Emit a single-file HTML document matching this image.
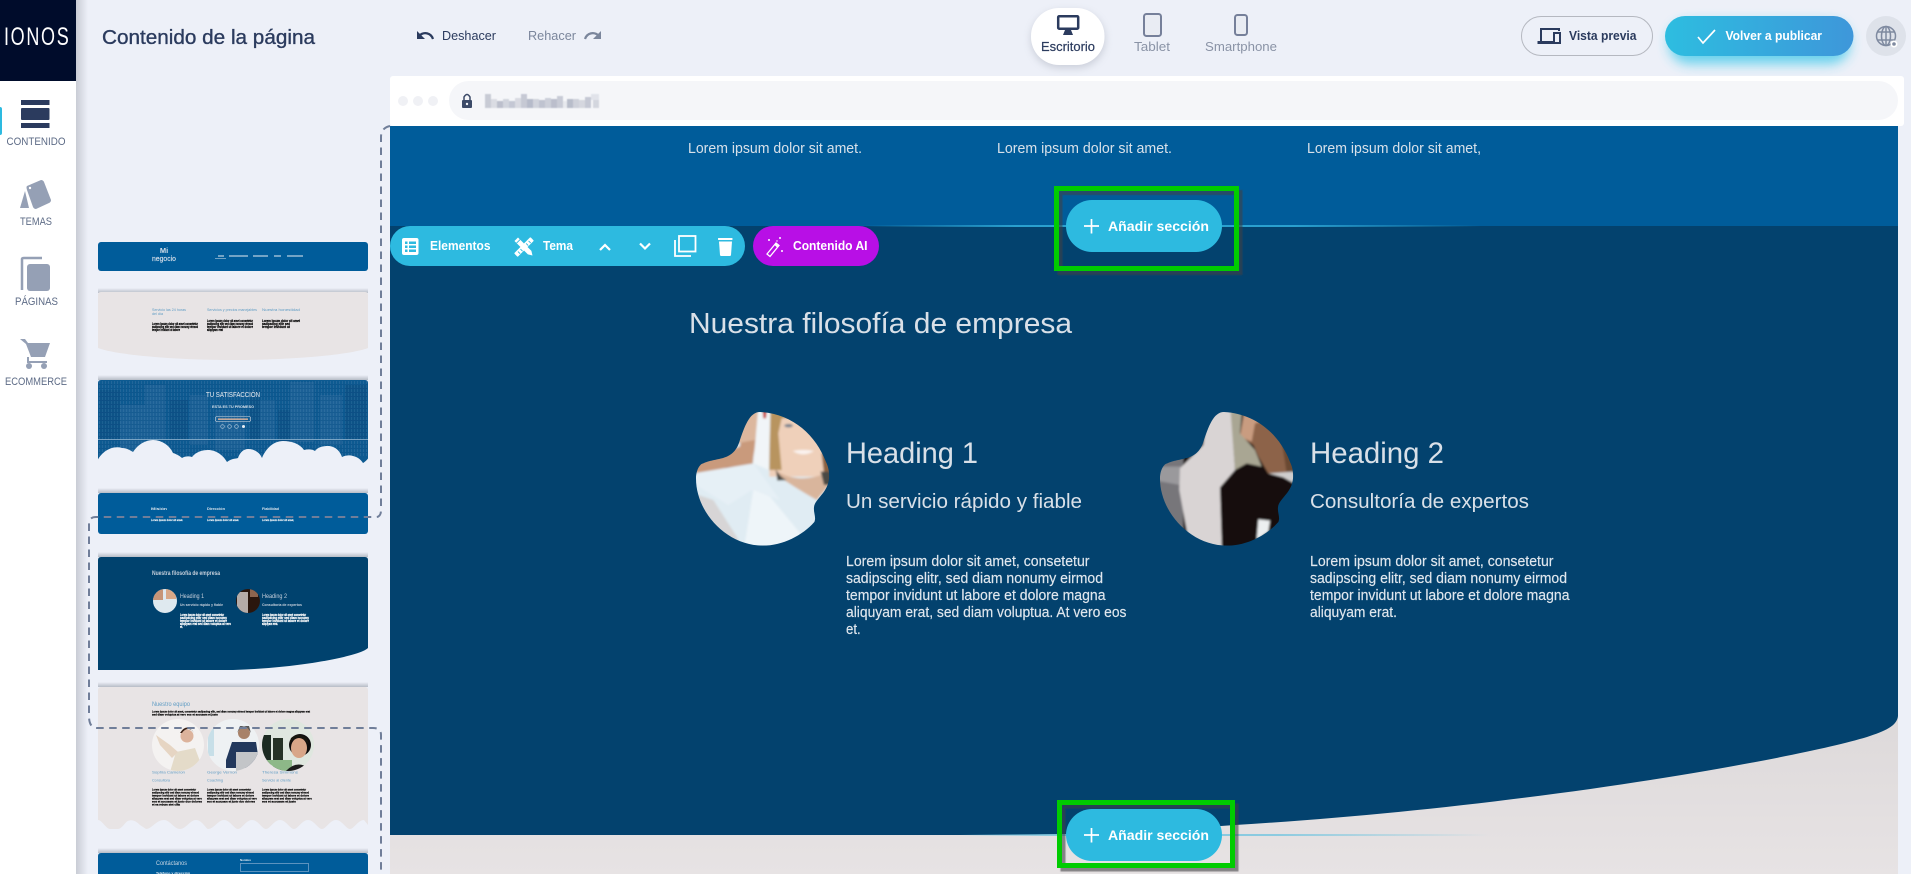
<!DOCTYPE html>
<html lang="es"><head><meta charset="utf-8"><title>Contenido de la página</title>
<style>
html,body{margin:0;padding:0;width:1911px;height:874px;overflow:hidden;background:#edf0f8}
svg{display:block}
text{font-family:"Liberation Sans",Arial,sans-serif}
</style></head><body>
<svg width="1911" height="874" viewBox="0 0 1911 874" xmlns="http://www.w3.org/2000/svg">
<defs>
<linearGradient id="sb" x1="0" x2="1" y1="0" y2="0"><stop offset="0" stop-color="#c9ccd5"/><stop offset="1" stop-color="#edf0f8"/></linearGradient>
<linearGradient id="cs" x1="0" x2="0" y1="0" y2="1"><stop offset="0" stop-color="#edf0f8"/><stop offset="1" stop-color="#b6bcc6"/></linearGradient>
<linearGradient id="pub" x1="0" x2="1" y1="0" y2="0"><stop offset="0" stop-color="#2dbde0"/><stop offset="1" stop-color="#3e97da"/></linearGradient>
<linearGradient id="l1" x1="860" x2="1481" y1="0" y2="0" gradientUnits="userSpaceOnUse"><stop offset="0" stop-color="#2aa0cf" stop-opacity="0"/><stop offset=".25" stop-color="#2aa0cf"/><stop offset=".7" stop-color="#2aa0cf"/><stop offset="1" stop-color="#2aa0cf" stop-opacity="0"/></linearGradient>
<linearGradient id="l2" x1="960" x2="1490" y1="0" y2="0" gradientUnits="userSpaceOnUse"><stop offset="0" stop-color="#7cc6de" stop-opacity="0"/><stop offset=".2" stop-color="#7cc6de"/><stop offset=".6" stop-color="#8ccbe0"/><stop offset="1" stop-color="#8ccbe0" stop-opacity="0"/></linearGradient>
<linearGradient id="grey" x1="0" x2="0" y1="0" y2="1"><stop offset="0" stop-color="#dcd8d9"/><stop offset="1" stop-color="#e7e3e4"/></linearGradient>
<pattern id="win" width="3" height="4" patternUnits="userSpaceOnUse"><rect width="1" height="4" fill="#5f97c0"/><rect width="3" height="1" fill="#0b4a7d"/></pattern>
<filter id="b1"><feGaussianBlur stdDeviation=".5"/></filter>
<filter id="ph" x="-10%" y="-10%" width="120%" height="120%"><feGaussianBlur stdDeviation="3.500"/></filter>
<filter id="thumb" filterUnits="userSpaceOnUse" x="90" y="230" width="290" height="650"><feGaussianBlur stdDeviation=".35"/></filter>
<filter id="psh" x="-30%" y="-50%" width="160%" height="220%"><feGaussianBlur stdDeviation="6"/></filter>
<filter id="wsh" x="-30%" y="-30%" width="160%" height="160%"><feGaussianBlur stdDeviation="4"/></filter>
<clipPath id="blob"><path d="M192 0C290 5 360 70 390 150C400 170 400 190 399 200C395 240 365 255 355 280C350 300 362 315 355 330C320 370 260 401 200 401C90 400 0 300 0 200C0 170 15 155 20 155C60 135 110 150 130 90C145 45 160 0 192 0Z"/></clipPath>
<clipPath id="t6a"><circle cx="178" cy="745" r="26"/></clipPath>
<clipPath id="t6b"><circle cx="233" cy="745" r="26"/></clipPath>
<clipPath id="t6c"><circle cx="288" cy="745" r="26"/></clipPath>
<clipPath id="t5a"><circle cx="165" cy="601" r="12"/></clipPath>
<clipPath id="t5b"><circle cx="248" cy="601" r="12"/></clipPath>
</defs>

<rect width="1911" height="874" fill="#edf0f8"/>

<!-- sidebar -->
<rect x="76" y="0" width="12" height="874" fill="url(#sb)"/>
<rect x="0" y="0" width="76" height="874" fill="#fff"/>
<rect x="0" y="0" width="76" height="81" fill="#000c2b"/>
<g transform="scale(.72 1)"><text x="5.500" y="45" font-size="25" fill="#fff" textLength="90" lengthAdjust="spacing">IONOS</text></g>
<rect x="-2" y="107" width="4" height="28" rx="2" fill="#2dbae0"/>
<g fill="#2b3b5e"><rect x="21" y="100" width="28.500" height="5"/><rect x="21" y="108" width="28.500" height="12" rx="1"/><rect x="21" y="123" width="28.500" height="5"/></g>
<text x="6.500" y="145" font-size="11" fill="#5d6b86" textLength="59" lengthAdjust="spacingAndGlyphs">CONTENIDO</text>
<g fill="#95a0b5"><path d="M27 186L41 180Q43 180 44 182L51 200Q51 202 49 203L36 209Q34 209 33 207L27 190Q26 187 27 186Z"/><circle cx="30" cy="188" r="1.200" fill="#fff"/><path d="M25 191L29 208H20Z"/></g>
<text x="20" y="225" font-size="11" fill="#5d6b86" textLength="32" lengthAdjust="spacingAndGlyphs">TEMAS</text>
<g><path d="M22 290V259Q22 258 24 258H42" fill="none" stroke="#95a0b5" stroke-width="2.500"/><rect x="27" y="264" width="23" height="27" rx="3" fill="#95a0b5"/></g>
<text x="15" y="305" font-size="11" fill="#5d6b86" textLength="43" lengthAdjust="spacingAndGlyphs">PÁGINAS</text>
<g fill="#95a0b5"><path d="M20 339H25L28 343H50L45 357H31L26 344Z"/><path d="M28 357V362H47" fill="none" stroke="#95a0b5" stroke-width="2"/><circle cx="29" cy="366" r="3"/><circle cx="44" cy="366" r="3"/></g>
<text x="5" y="385" font-size="11" fill="#5d6b86" textLength="62" lengthAdjust="spacingAndGlyphs">ECOMMERCE</text>

<!-- top bar -->
<text x="102" y="44" font-size="20" fill="#2b3b5e" stroke="#2b3b5e" stroke-width=".35" textLength="213" lengthAdjust="spacingAndGlyphs">Contenido de la página</text>
<path d="M433 39C431 33 424 31 419 36" fill="none" stroke="#2b3b5e" stroke-width="2.200"/><path d="M417 31V39H425Z" fill="#2b3b5e"/>
<text x="442" y="40" font-size="13" fill="#2b3b5e" textLength="54" lengthAdjust="spacingAndGlyphs">Deshacer</text>
<text x="528" y="40" font-size="13" fill="#7b869c" textLength="48" lengthAdjust="spacingAndGlyphs">Rehacer</text>
<path d="M585 39C587 33 594 31 599 36" fill="none" stroke="#7b869c" stroke-width="2.200"/><path d="M601 31V39H593Z" fill="#7b869c"/>

<rect x="1031" y="11" width="74" height="57" rx="28" fill="#8a90a0" opacity=".35" filter="url(#wsh)"/>
<rect x="1031" y="8" width="73.500" height="57" rx="28" fill="#fff"/>
<rect x="1058.200" y="16.200" width="20" height="12.500" rx="1" fill="#fff" stroke="#2b3b5e" stroke-width="2.500"/>
<path d="M1065 30H1071L1073 35H1063Z" fill="#2b3b5e"/>
<text x="1041" y="51" font-size="13" fill="#2b3b5e" stroke="#2b3b5e" stroke-width=".2" textLength="54" lengthAdjust="spacingAndGlyphs">Escritorio</text>
<rect x="1144" y="14" width="17" height="22" rx="2.500" fill="#e9ecf3" stroke="#76809a" stroke-width="2"/><rect x="1150" y="34" width="5" height="1" fill="#eee"/>
<text x="1134" y="51" font-size="13" fill="#8a93a6" textLength="36" lengthAdjust="spacingAndGlyphs">Tablet</text>
<rect x="1235" y="15" width="12" height="20" rx="2.500" fill="#e9ecf3" stroke="#76809a" stroke-width="2"/><rect x="1239" y="33" width="4" height="1" fill="#eee"/>
<text x="1205" y="51" font-size="13" fill="#8a93a6" textLength="72" lengthAdjust="spacingAndGlyphs">Smartphone</text>

<rect x="1521.500" y="16.500" width="131" height="39" rx="19.500" fill="#edf0f8" stroke="#b5b8c0" stroke-width="1"/>
<path d="M1541 41V29H1559V31" fill="none" stroke="#2b3b5e" stroke-width="2"/><rect x="1537.500" y="41" width="16" height="3" fill="#2b3b5e"/>
<rect x="1554" y="33" width="6" height="10" fill="none" stroke="#2b3b5e" stroke-width="2"/>
<text x="1569" y="40" font-size="13" fill="#2b3b5e" textLength="67.500" lengthAdjust="spacingAndGlyphs" font-weight="700">Vista previa</text>

<rect x="1669" y="22" width="181" height="42" rx="20" fill="#2fc5e8" opacity=".7" filter="url(#psh)"/>
<rect x="1665" y="16" width="188.500" height="40" rx="20" fill="url(#pub)"/>
<path d="M1698 37L1703 43L1715 30" fill="none" stroke="#fff" stroke-width="1.700"/>
<text x="1725.500" y="40" font-size="13" fill="#fff" textLength="96.500" lengthAdjust="spacingAndGlyphs" font-weight="700">Volver a publicar</text>

<circle cx="1886" cy="36" r="20" fill="#dee2ea"/>
<g fill="none" stroke="#7f8aa0" stroke-width="1.500"><circle cx="1886" cy="36" r="9.500"/><ellipse cx="1886" cy="36" rx="4.500" ry="9.500"/><path d="M1877 32H1895M1877 40H1895M1886 26V46"/></g>
<circle cx="1894" cy="44" r="3.500" fill="#fff"/><circle cx="1894" cy="44" r="1.800" fill="#7f8aa0"/>

<!-- browser frame -->
<rect x="390" y="76" width="1514" height="50" rx="3" fill="#fff"/>
<rect x="449" y="81" width="1449" height="39" rx="19.500" fill="#f5f6f9"/>
<g fill="#f0f1f5"><circle cx="403" cy="101" r="5"/><circle cx="418" cy="101" r="5"/><circle cx="433" cy="101" r="5"/></g>
<rect x="462" y="100" width="10" height="8" rx="1" fill="#3c4a68"/><path d="M464 100V97Q467 92 470 97V100" fill="none" stroke="#3c4a68" stroke-width="1.500"/><circle cx="467" cy="104" r="1.200" fill="#f5f6f9"/>
<g filter="url(#b1)" opacity=".9">
<rect x="485" y="94" width="6" height="14" fill="#c4c7d2"/><rect x="491" y="99" width="6" height="9" fill="#d8dae1"/><rect x="497" y="101" width="6" height="7" fill="#b6bac8"/><rect x="503" y="99" width="6" height="9" fill="#ced1da"/><rect x="509" y="101" width="6" height="7" fill="#bfc3d0"/><rect x="515" y="98" width="6" height="10" fill="#d6d8e0"/><rect x="521" y="94" width="6" height="14" fill="#c1c5d1"/><rect x="527" y="99" width="6" height="9" fill="#b0b5c5"/><rect x="533" y="99" width="6" height="9" fill="#cdd0d9"/><rect x="539" y="100" width="6" height="8" fill="#babecc"/><rect x="545" y="98" width="6" height="10" fill="#c8cbd6"/><rect x="551" y="99" width="6" height="9" fill="#b5b9c8"/><rect x="557" y="96" width="6" height="12" fill="#c4c7d3"/><rect x="563" y="101" width="4" height="7" fill="#e6e8ed"/><rect x="567" y="99" width="6" height="9" fill="#b2b7c6"/><rect x="573" y="99" width="6" height="9" fill="#cacdd7"/><rect x="579" y="100" width="6" height="8" fill="#d2d4dd"/><rect x="585" y="97" width="6" height="11" fill="#c0c4d0"/><rect x="591" y="94" width="8" height="6" fill="#dfe2e9"/><rect x="593" y="100" width="6" height="8" fill="#d0d3dc"/>
</g>

<!-- page -->
<rect x="390" y="126" width="1508" height="100" fill="#005c9a"/>
<rect x="390" y="700" width="1508" height="174" fill="url(#grey)"/>
<path d="M390 226H1898V716C1897 726 1885 731 1867 737C1790 760 1520 808 1235 825C1170 830 1100 834 1035 835H390Z" fill="#03426e"/>
<rect x="860" y="225" width="621" height="2" fill="url(#l1)"/>
<rect x="960" y="834" width="530" height="2" fill="url(#l2)"/>

<g fill="#d8e1ea" font-size="15">
<text x="688" y="153" textLength="174" lengthAdjust="spacingAndGlyphs">Lorem ipsum dolor sit amet.</text>
<text x="997" y="153" textLength="175" lengthAdjust="spacingAndGlyphs">Lorem ipsum dolor sit amet.</text>
<text x="1307" y="153" textLength="174" lengthAdjust="spacingAndGlyphs">Lorem ipsum dolor sit amet,</text>
</g>

<text x="689" y="333" font-size="29" fill="#d9e0e8" textLength="383" lengthAdjust="spacingAndGlyphs">Nuestra filosofía de empresa</text>

<!-- blob 1 -->
<g transform="translate(696 412) scale(.3333)"><g clip-path="url(#blob)"><g transform="translate(-78 -66)" filter="url(#ph)">
<rect x="40" y="30" width="470" height="470" fill="#e0ecf3"/>
<path d="M70 215L210 170L225 60H275L250 200L245 260L175 340L70 270Z" fill="#c99a7c"/>
<path d="M170 230L245 230L240 265L175 340L100 280Z" fill="#b98468"/>
<path d="M200 60H270L255 150L200 160Z" fill="#dcb79e"/>
<rect x="298" y="40" width="200" height="220" fill="#efd0ba"/>
<path d="M298 40H420V78L370 82L335 85L325 130L335 240H298Z" fill="#b8945f"/>
<path d="M455 190L500 180V250H462Z" fill="#8a6140"/>
<path d="M266 40H302L297 240L250 220Z" fill="#f1f5f8"/>
<path d="M277 50H292L288 85H280Z" fill="#c9423d"/>
<path d="M368 183Q400 176 432 183Q400 203 368 183Z" fill="#faf3ef"/>
<ellipse cx="356" cy="107" rx="13" ry="5" fill="#74808e"/>
<path d="M315 240Q390 290 490 240V270L440 330Q370 290 320 255Z" fill="#d9b59c"/>
<path d="M318 238Q330 262 350 270L322 272Z" fill="#4a4a44"/>
<path d="M452 245H490V285H462Z" fill="#4a4a44"/>
<path d="M250 220L330 330L245 300L175 345L70 280V250Z" fill="#e6f0f6"/>
<path d="M70 310L130 330L200 440L220 490H40Z" fill="#d7d5d6"/>
<path d="M250 300L300 320L440 490H220Z" fill="#eef5f9"/>
</g></g></g>
<text x="846" y="463" font-size="29.500" fill="#d9e0e8" textLength="132" lengthAdjust="spacingAndGlyphs">Heading 1</text>
<text x="846" y="508" font-size="20" fill="#d9e0e8" textLength="236" lengthAdjust="spacingAndGlyphs">Un servicio rápido y fiable</text>
<g font-size="14.300" fill="#e0e7ee" stroke="#e0e7ee" stroke-width=".15">
<text x="846" y="566" textLength="243.500" lengthAdjust="spacingAndGlyphs">Lorem ipsum dolor sit amet, consetetur</text>
<text x="846" y="583" textLength="257" lengthAdjust="spacingAndGlyphs">sadipscing elitr, sed diam nonumy eirmod</text>
<text x="846" y="600" textLength="259.500" lengthAdjust="spacingAndGlyphs">tempor invidunt ut labore et dolore magna</text>
<text x="846" y="617" textLength="280.500" lengthAdjust="spacingAndGlyphs">aliquyam erat, sed diam voluptua. At vero eos</text>
<text x="846" y="634" textLength="14.700" lengthAdjust="spacingAndGlyphs">et.</text>
</g>

<!-- blob 2 -->
<g transform="translate(1160 412) scale(.3333)"><g clip-path="url(#blob)"><g transform="translate(-60 -66)" filter="url(#ph)">
<rect x="30" y="30" width="470" height="470" fill="#140c08"/>
<rect x="30" y="200" width="100" height="260" fill="#77767a"/>
<path d="M40 270L120 285L125 285V230H40Z" fill="#9a999c"/>
<path d="M315 50L300 140L340 165L355 200L385 250L480 255V50Z" fill="#8d6449"/>
<path d="M315 50L300 140L335 155L345 100L400 85V50Z" fill="#c99c80"/>
<path d="M420 120L480 110V250H440Z" fill="#6b4833"/>
<path d="M268 40H308L300 130L345 180L365 230L320 220L285 240Z" fill="#a9a693"/>
<path d="M120 235L190 165L205 40H270L285 240L240 292L246 490H160L140 420L118 300Z" fill="#d9d4d4"/>
<path d="M385 250L460 245L480 290L430 262Z" fill="#cfcece"/>
<path d="M355 388L390 392L385 425L350 450Z" fill="#eceff0"/>
</g></g></g>
<text x="1310" y="463" font-size="29.500" fill="#d9e0e8" textLength="134" lengthAdjust="spacingAndGlyphs">Heading 2</text>
<text x="1310" y="508" font-size="20" fill="#d9e0e8" textLength="219" lengthAdjust="spacingAndGlyphs">Consultoría de expertos</text>
<g font-size="14.300" fill="#e0e7ee" stroke="#e0e7ee" stroke-width=".15">
<text x="1310" y="566" textLength="243.500" lengthAdjust="spacingAndGlyphs">Lorem ipsum dolor sit amet, consetetur</text>
<text x="1310" y="583" textLength="257" lengthAdjust="spacingAndGlyphs">sadipscing elitr, sed diam nonumy eirmod</text>
<text x="1310" y="600" textLength="259.500" lengthAdjust="spacingAndGlyphs">tempor invidunt ut labore et dolore magna</text>
<text x="1310" y="617" textLength="87" lengthAdjust="spacingAndGlyphs">aliquyam erat.</text>
</g>

<!-- toolbar -->
<rect x="390" y="226" width="355" height="40" rx="20" fill="#2dbae0"/>
<rect x="402" y="238" width="16.500" height="17" rx="2" fill="#fff"/>
<g fill="#2dbae0"><rect x="405" y="241.500" width="2.500" height="2.500"/><rect x="405" y="245.500" width="2.500" height="2.500"/><rect x="405" y="249.500" width="2.500" height="2.500"/><rect x="409" y="241.500" width="7" height="2.500"/><rect x="409" y="245.500" width="7" height="2.500"/><rect x="409" y="249.500" width="7" height="2.500"/></g>
<text x="430" y="250" font-size="13" font-weight="700" fill="#fff" textLength="60.500" lengthAdjust="spacingAndGlyphs">Elementos</text>
<g transform="translate(524 247)"><rect x="-2.500" y="-11.500" width="5" height="23" rx=".8" fill="#fff" transform="rotate(45)"/><path d="M-2.500 -11L2.500 -11V8L0 12L-2.500 8Z" fill="#fff" transform="rotate(-45)"/><g stroke="#2dbae0" stroke-width=".9" fill="none"><path d="M-1 -7.500L2 -7.500M-1 -4L2 -4M-1 4L2 4M-1 7.500L2 7.500" transform="rotate(45)"/><path d="M-2.500 -8H2.500" transform="rotate(-45)"/></g></g>
<text x="543" y="250" font-size="13" font-weight="700" fill="#fff" textLength="30" lengthAdjust="spacingAndGlyphs">Tema</text>
<path d="M600 250L605 245L610 250" fill="none" stroke="#fff" stroke-width="2.200"/>
<path d="M640 243.500L645 248.500L650 243.500" fill="none" stroke="#fff" stroke-width="2.200"/>
<rect x="679" y="236" width="16.500" height="15.500" fill="none" stroke="#fff" stroke-width="1.800"/>
<path d="M675 240V256H691" fill="none" stroke="#fff" stroke-width="1.800"/>
<rect x="718" y="238" width="14.500" height="2" rx=".5" fill="#fff"/><path d="M719 241.500H732L731 255Q731 256 729 256H722Q720 256 720 255Z" fill="#fff"/>

<rect x="753" y="226" width="126" height="40" rx="20" fill="#b80fe6"/>
<path d="M767 254L776 243L779 245.500L770 256.500Z" fill="none" stroke="#fff" stroke-width="1.300"/>
<path d="M775 244L778 247" stroke="#fff" stroke-width="2"/>
<g fill="#fff"><circle cx="769" cy="240" r="1"/><circle cx="780" cy="238" r="1"/><circle cx="782" cy="251" r="1"/><circle cx="777" cy="241" r=".7"/></g>
<text x="793" y="250" font-size="13" font-weight="700" fill="#fff" textLength="74.500" lengthAdjust="spacingAndGlyphs">Contenido AI</text>

<!-- add section 1 -->
<rect x="1060" y="192.500" width="180" height="80" fill="none" stroke="#3f3f46" stroke-opacity=".6" stroke-width="5" filter="url(#b1)"/>
<rect x="1056.500" y="188.500" width="180" height="80" fill="none" stroke="#00cc00" stroke-width="5"/>
<rect x="1066" y="200" width="156" height="52" rx="26" fill="#2dbae0"/>
<path d="M1091.500 219V233.500M1084 226H1099" stroke="#fff" stroke-width="1.700" fill="none"/>
<text x="1108" y="231" font-size="13.500" font-weight="700" fill="#fff" textLength="101" lengthAdjust="spacingAndGlyphs">Añadir sección</text>

<!-- add section 2 -->
<rect x="1063" y="806" width="173" height="63" fill="none" stroke="#3f3f46" stroke-opacity=".6" stroke-width="5" filter="url(#b1)"/>
<rect x="1059.500" y="802.500" width="173" height="63" fill="none" stroke="#00cc00" stroke-width="5"/>
<rect x="1066" y="809" width="156" height="52" rx="26" fill="#2dbae0"/>
<path d="M1091.500 828V842.500M1084 835H1099" stroke="#fff" stroke-width="1.700" fill="none"/>
<text x="1108" y="840" font-size="13.500" font-weight="700" fill="#fff" textLength="101" lengthAdjust="spacingAndGlyphs">Añadir sección</text>

<!-- thumbnails -->
<g filter="url(#thumb)">
<!-- T1 -->
<rect x="98" y="242" width="270" height="29" rx="3" fill="#005c9a"/>
<text x="164" y="253" font-size="7.500" font-weight="700" fill="#d5dfea" text-anchor="middle">Mi</text>
<text x="152" y="261" font-size="7.500" fill="#d5dfea" stroke="#d5dfea" stroke-width=".15" textLength="24" lengthAdjust="spacingAndGlyphs">negocio</text>
<g fill="#e6edf3"><rect x="218" y="255.500" width="6" height="1"/><rect x="215" y="258" width="11" height=".8" opacity=".6"/><rect x="229" y="255.500" width="19" height="1"/><rect x="253" y="255.500" width="15" height="1"/><rect x="274" y="255.500" width="7" height="1"/><rect x="287" y="255.500" width="16" height="1"/></g>

<!-- T2 -->
<rect x="98" y="288" width="270" height="5" fill="url(#cs)"/>
<path d="M98 295Q98 292 101 292H365Q368 292 368 295V348C350 355 290 360 233 360C176 360 116 355 98 348Z" fill="#e8e4e5"/>
<g font-size="3.800" fill="#5f9cc4"><text x="152" y="311" textLength="34" lengthAdjust="spacingAndGlyphs">Servicio las 24 horas</text><text x="152" y="315" textLength="11" lengthAdjust="spacingAndGlyphs">del día</text><text x="207" y="311" textLength="50" lengthAdjust="spacingAndGlyphs">Servicios y precios manejables</text><text x="262" y="311" textLength="38" lengthAdjust="spacingAndGlyphs">Nuestra honestidad</text></g>
<g font-size="3.200" font-weight="700" fill="#000" stroke="#000" stroke-width=".2"><text x="152" y="325" textLength="46" lengthAdjust="spacingAndGlyphs">Lorem ipsum dolor sit amet consetetur</text><text x="152" y="328" textLength="46" lengthAdjust="spacingAndGlyphs">sadipscing elitr sed diam nonumy eirmod</text><text x="152" y="331" textLength="28" lengthAdjust="spacingAndGlyphs">tempor invidunt ut labore</text>
<text x="207" y="322" textLength="46" lengthAdjust="spacingAndGlyphs">Lorem ipsum dolor sit amet consetetur</text><text x="207" y="325" textLength="46" lengthAdjust="spacingAndGlyphs">sadipscing elitr sed diam nonumy eirmod</text><text x="207" y="328" textLength="46" lengthAdjust="spacingAndGlyphs">tempor invidunt ut labore et dolore</text><text x="207" y="331" textLength="16" lengthAdjust="spacingAndGlyphs">aliquyam erat</text>
<text x="262" y="322" textLength="38" lengthAdjust="spacingAndGlyphs">Lorem ipsum dolor sit amet</text><text x="262" y="325" textLength="28" lengthAdjust="spacingAndGlyphs">sadipscing elitr sed</text><text x="262" y="328" textLength="28" lengthAdjust="spacingAndGlyphs">tempor invidunt ut</text></g>

<!-- T3 -->
<rect x="98" y="375" width="270" height="5" fill="url(#cs)"/>
<path d="M98 383Q98 380 101 380H365Q368 380 368 383V470H98Z" fill="#115a91"/>
<g fill="#2b6c9e" opacity=".4">
<rect x="145" y="385" width="20" height="55"/><rect x="120" y="405" width="25" height="50"/><rect x="190" y="395" width="18" height="50"/><rect x="215" y="410" width="30" height="40"/><rect x="290" y="382" width="24" height="60"/><rect x="320" y="395" width="22" height="50"/><rect x="260" y="400" width="15" height="40"/>
</g>
<g fill="#0b4a7d" opacity=".45"><rect x="100" y="390" width="20" height="50"/><rect x="170" y="400" width="18" height="40"/><rect x="250" y="390" width="10" height="50"/><rect x="278" y="410" width="12" height="35"/><rect x="345" y="385" width="22" height="55"/></g>
<rect x="98" y="381" width="270" height="75" fill="url(#win)" opacity=".2"/>
<text x="206" y="397" font-size="7" fill="#d6dfe8" stroke="#d6dfe8" stroke-width=".1" textLength="54" lengthAdjust="spacingAndGlyphs">TU SATISFACCIÓN</text>
<text x="212" y="408" font-size="4" font-weight="700" fill="#d6dfe8" textLength="42" lengthAdjust="spacingAndGlyphs">ESTA ES TU PROMESO</text>
<rect x="215.500" y="416.500" width="35" height="5" rx="1.500" fill="none" stroke="#d8dde4" stroke-width=".6"/><rect x="218" y="418.500" width="30" height="1.300" fill="#eeb99a"/>
<g fill="none" stroke="#bcd0e0" stroke-width=".6"><circle cx="222.500" cy="426.500" r="1.800"/><circle cx="229.500" cy="426.500" r="1.800"/><circle cx="236.500" cy="426.500" r="1.800"/></g><circle cx="243.500" cy="426.500" r="1.500" fill="#e6edf3"/>
<rect x="98" y="439" width="270" height=".8" fill="#8fb4d0"/>
<path d="M96 473V464C100 452 112 445 122 448C126 448 130 450 133 452C138 444 146 440 153 440C162 440 170 446 173 453C176 454 180 456 182 458C185 456 189 456 192 457C196 452 202 450 208 450C216 450 223 455 227 462C232 458 236 459 238 458C240 452 244 449 248 449C255 449 260 453 262 458C266 448 274 441 283 441C292 441 300 444 304 450C308 449 312 449 315 451C318 447 323 446 328 446C335 446 340 451 342 457C346 455 350 455 353 456C358 457 361 460 363 463C365 462 367 460 370 456V473Z" fill="#edf0f8"/>

<!-- T4 -->
<rect x="98" y="488" width="270" height="5" fill="url(#cs)"/>
<rect x="98" y="493" width="270" height="41" rx="3" fill="#005c9a"/>
<g font-size="3.800" font-weight="700" fill="#d9e3ec"><text x="151" y="510" textLength="16" lengthAdjust="spacingAndGlyphs">Misión</text><text x="207" y="510" textLength="18" lengthAdjust="spacingAndGlyphs">Dirección</text><text x="262" y="510" textLength="17" lengthAdjust="spacingAndGlyphs">Fiabilidad</text></g>
<g font-size="3" font-weight="700" fill="#eef2f6" stroke="#eef2f6" stroke-width=".15"><text x="151" y="521" textLength="32" lengthAdjust="spacingAndGlyphs">Lorem ipsum dolor sit amet.</text><text x="207" y="521" textLength="32" lengthAdjust="spacingAndGlyphs">Lorem ipsum dolor sit amet.</text><text x="262" y="521" textLength="32" lengthAdjust="spacingAndGlyphs">Lorem ipsum dolor sit amet,</text></g>

<!-- T5 -->
<rect x="98" y="552" width="270" height="5" fill="url(#cs)"/>
<path d="M98 560Q98 557 101 557H365Q368 557 368 560V648C360 656 300 668 233 670H98Z" fill="#03426e"/>
<text x="152" y="575" font-size="6" font-weight="700" fill="#c5d0dc" textLength="68" lengthAdjust="spacingAndGlyphs">Nuestra filosofía de empresa</text>
<g clip-path="url(#t5a)"><rect x="153" y="589" width="24" height="24" fill="#dfe9ef"/><rect x="153" y="589" width="10" height="11" fill="#c69578"/><rect x="166" y="589" width="10" height="10" fill="#d8a888"/></g>
<g clip-path="url(#t5b)"><rect x="236" y="589" width="24" height="24" fill="#2a1810"/><rect x="237" y="592" width="11" height="21" fill="#b5aca8"/><rect x="250" y="589" width="8" height="8" fill="#8d6550"/></g>
<text x="180" y="598" font-size="6" fill="#c5d0dc" textLength="24" lengthAdjust="spacingAndGlyphs">Heading 1</text>
<text x="262" y="598" font-size="6" fill="#c5d0dc" textLength="25" lengthAdjust="spacingAndGlyphs">Heading 2</text>
<text x="180" y="606" font-size="3.800" font-weight="700" fill="#c5d0dc" textLength="43" lengthAdjust="spacingAndGlyphs">Un servicio rápido y fiable</text>
<text x="262" y="606" font-size="3.800" font-weight="700" fill="#c5d0dc" textLength="40" lengthAdjust="spacingAndGlyphs">Consultoría de expertos</text>
<g font-size="3.300" font-weight="700" fill="#fff" stroke="#fff" stroke-width=".2"><text x="180" y="616" textLength="44" lengthAdjust="spacingAndGlyphs">Lorem ipsum dolor sit amet consetetur</text><text x="180" y="619" textLength="47" lengthAdjust="spacingAndGlyphs">sadipscing elitr sed diam nonumy</text><text x="180" y="622" textLength="47" lengthAdjust="spacingAndGlyphs">tempor invidunt ut labore et dolore</text><text x="180" y="625" textLength="51" lengthAdjust="spacingAndGlyphs">aliquyam erat sed diam voluptua at vero</text><text x="180" y="628" textLength="3" lengthAdjust="spacingAndGlyphs">et.</text>
<text x="262" y="616" textLength="44" lengthAdjust="spacingAndGlyphs">Lorem ipsum dolor sit amet consetetur</text><text x="262" y="619" textLength="47" lengthAdjust="spacingAndGlyphs">sadipscing elitr sed diam nonumy</text><text x="262" y="622" textLength="47" lengthAdjust="spacingAndGlyphs">tempor invidunt ut labore et dolore</text><text x="262" y="625" textLength="16" lengthAdjust="spacingAndGlyphs">aliquyam erat.</text></g>

<!-- T6 -->
<rect x="98" y="682" width="270" height="5" fill="url(#cs)"/>
<path d="M98 690Q98 687 101 687H365Q368 687 368 690V829H98Z" fill="#e8e4e5"/>
<path d="M98 820C102 820 106 829 110 829H118C122 829 126 821 128 821C132 819 136 821 140 825L146 829C152 829 156 820 164 820C170 820 174 829 180 829C186 829 190 820 196 820C202 820 206 829 208 829C214 829 218 820 224 820C230 820 234 829 238 829C242 829 246 820 252 820C258 820 262 829 266 829C270 829 274 820 280 820C286 820 290 829 294 829C298 829 302 820 308 820C314 820 318 829 322 829C326 829 330 820 336 820C342 820 346 829 350 829C354 829 358 820 364 820L368 825V834H98Z" fill="#edf0f8"/>
<text x="152" y="706" font-size="6" fill="#5f9cc4" textLength="38" lengthAdjust="spacingAndGlyphs">Nuestro equipo</text>
<g font-size="3" font-weight="700" fill="#000" stroke="#000" stroke-width=".2"><text x="152" y="712.500" textLength="158" lengthAdjust="spacingAndGlyphs">Lorem ipsum dolor sit amet, consetetur sadipscing elitr, sed diam nonumy eirmod tempor invidunt ut labore et dolore magna aliquyam erat</text><text x="152" y="715.500" textLength="66" lengthAdjust="spacingAndGlyphs">sed diam voluptua at vero eos et accusam et justo</text></g>
<g clip-path="url(#t6a)"><rect x="150" y="718" width="56" height="54" fill="#f4f2f1"/><path d="M170 772L176 752L195 748L204 772Z" fill="#e4dbc9"/><path d="M156 735L170 745L178 752L172 758L160 745Z" fill="#e6d5c3"/><circle cx="187" cy="736" r="6.500" fill="#dcb39c"/><path d="M180 733Q187 722 194 733L192 730Q186 727 182 733Z" fill="#3a2419"/><path d="M180 772Q195 770 204 758V772Z" fill="#e8455f"/></g>
<g clip-path="url(#t6b)"><rect x="205" y="718" width="56" height="54" fill="#eef1f3"/><rect x="208" y="726" width="6" height="30" fill="#c7dfe8"/><path d="M226 760L232 742H256L260 768H226Z" fill="#21385c"/><circle cx="244" cy="733" r="6" fill="#a88269"/><path d="M237 733Q244 720 251 733L249 726H240Z" fill="#5a5a5a"/><path d="M236 772V752H258V768Z" fill="#c3c5c8"/></g>
<g clip-path="url(#t6c)"><rect x="260" y="718" width="56" height="54" fill="#dfe7df"/><rect x="262" y="735" width="9" height="32" fill="#1f2a24"/><rect x="273" y="738" width="10" height="34" fill="#253028"/><rect x="262" y="760" width="30" height="12" fill="#8db888"/><circle cx="300" cy="745" r="11" fill="#101010"/><ellipse cx="299" cy="748" rx="8" ry="10" fill="#d8a688"/><path d="M289 745Q298 730 309 745L307 738Q298 732 291 738Z" fill="#161311"/><path d="M285 772Q298 757 314 772Z" fill="#1b1b1b"/></g>
<g font-size="3.900" fill="#5f9cc4"><text x="152" y="773.500" textLength="33" lengthAdjust="spacingAndGlyphs">Sophia Cameron</text><text x="207" y="773.500" textLength="30" lengthAdjust="spacingAndGlyphs">George Vernon</text><text x="262" y="773.500" textLength="36" lengthAdjust="spacingAndGlyphs">Theresa Simmons</text><text x="152" y="781.500" textLength="18" lengthAdjust="spacingAndGlyphs">Consultora</text><text x="207" y="781.500" textLength="16" lengthAdjust="spacingAndGlyphs">Coaching</text><text x="262" y="781.500" textLength="29" lengthAdjust="spacingAndGlyphs">Servicio al cliente</text></g>
<g font-size="3" font-weight="700" fill="#000" stroke="#000" stroke-width=".2"><text x="152" y="790.500" textLength="44" lengthAdjust="spacingAndGlyphs">Lorem ipsum dolor sit amet consetetur</text><text x="152" y="793.500" textLength="47" lengthAdjust="spacingAndGlyphs">sadipscing elitr sed diam nonumy eirmod</text><text x="152" y="796.500" textLength="47" lengthAdjust="spacingAndGlyphs">tempor invidunt ut labore et dolore</text><text x="152" y="799.500" textLength="50" lengthAdjust="spacingAndGlyphs">aliquyam erat sed diam voluptua at vero</text><text x="152" y="802.500" textLength="50" lengthAdjust="spacingAndGlyphs">eos et accusam et justo duo dolores</text><text x="152" y="805.500" textLength="28" lengthAdjust="spacingAndGlyphs">et ea rebum stet clita</text>
<text x="207" y="790.500" textLength="44" lengthAdjust="spacingAndGlyphs">Lorem ipsum dolor sit amet consetetur</text><text x="207" y="793.500" textLength="47" lengthAdjust="spacingAndGlyphs">sadipscing elitr sed diam nonumy eirmod</text><text x="207" y="796.500" textLength="47" lengthAdjust="spacingAndGlyphs">tempor invidunt ut labore et dolore</text><text x="207" y="799.500" textLength="50" lengthAdjust="spacingAndGlyphs">aliquyam erat sed diam voluptua at vero</text><text x="207" y="802.500" textLength="48" lengthAdjust="spacingAndGlyphs">eos et accusam et justo duo dolores</text>
<text x="262" y="790.500" textLength="44" lengthAdjust="spacingAndGlyphs">Lorem ipsum dolor sit amet consetetur</text><text x="262" y="793.500" textLength="47" lengthAdjust="spacingAndGlyphs">sadipscing elitr sed diam nonumy eirmod</text><text x="262" y="796.500" textLength="47" lengthAdjust="spacingAndGlyphs">tempor invidunt ut labore et dolore</text><text x="262" y="799.500" textLength="50" lengthAdjust="spacingAndGlyphs">aliquyam erat sed diam voluptua at vero</text><text x="262" y="802.500" textLength="34" lengthAdjust="spacingAndGlyphs">eos et accusam et justo</text></g>

<!-- T7 -->
<rect x="98" y="848" width="270" height="5" fill="url(#cs)"/>
<path d="M98 856Q98 853 101 853H365Q368 853 368 856V874H98Z" fill="#005c9a"/>
<text x="156" y="865" font-size="6" fill="#c9d6e3" textLength="31" lengthAdjust="spacingAndGlyphs">Contáctanos</text>
<text x="156" y="874" font-size="3" font-weight="700" fill="#e8eef3" textLength="34" lengthAdjust="spacingAndGlyphs">Teléfono y dirección</text>
<text x="240" y="861" font-size="3" font-weight="700" fill="#e8eef3" textLength="11" lengthAdjust="spacingAndGlyphs">Nombre</text>
<rect x="240.500" y="863.500" width="68" height="8" fill="none" stroke="#5b93bf" stroke-width="1"/>
</g>

<!-- dashed connectors -->
<g fill="none" stroke="#707e99" stroke-width="2" stroke-dasharray="7.500 5.500">
<path d="M390 126Q381 128 381 137V510Q381 517 376 517H96Q89 517 89 524V716Q89 728 97 728H373Q381 728 381 735V874"/>
</g>
</svg>
</body></html>
